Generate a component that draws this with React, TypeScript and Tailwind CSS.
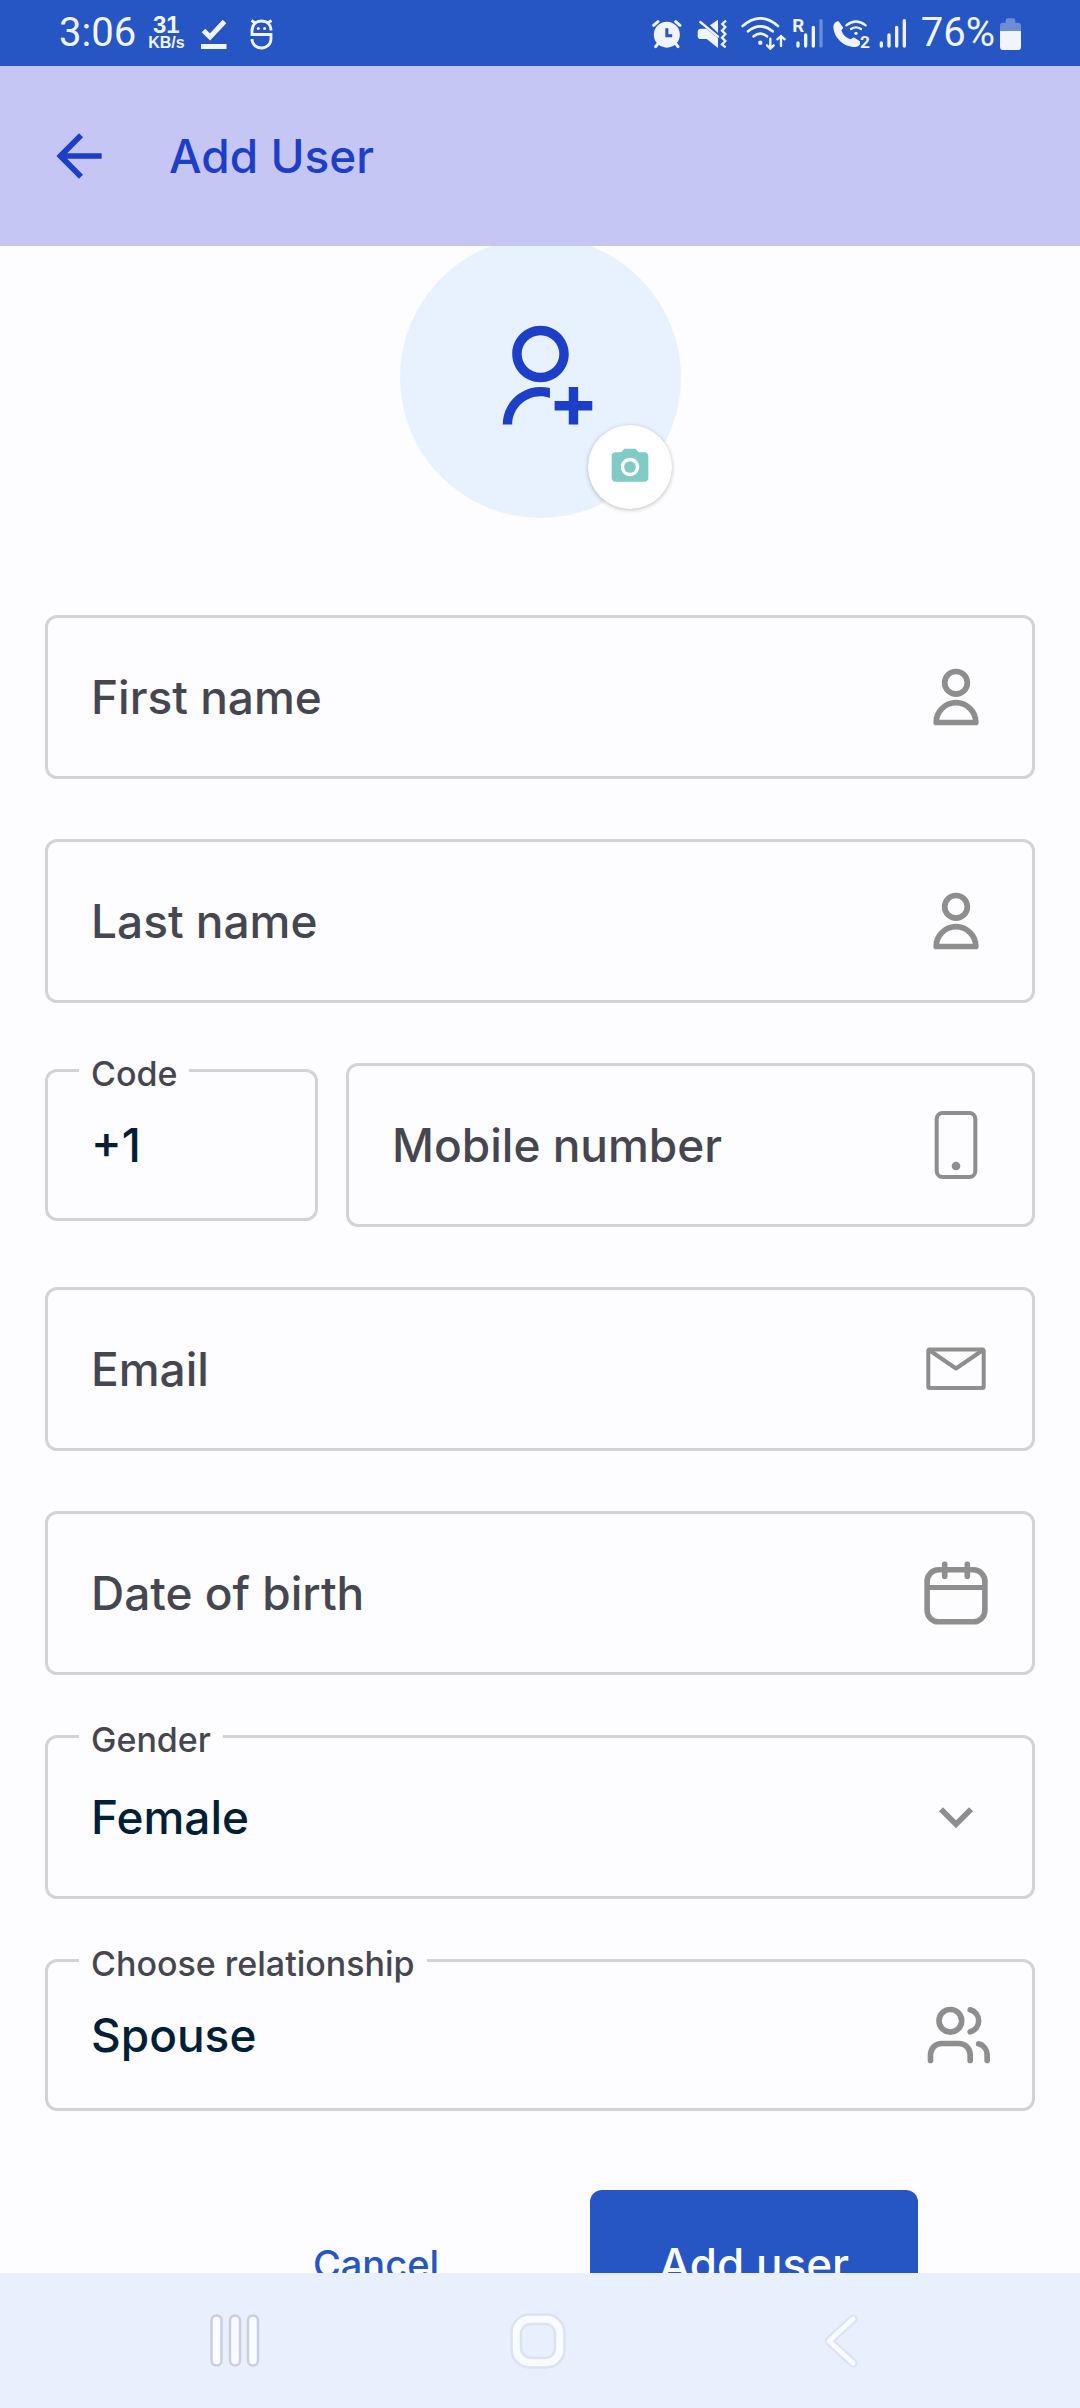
import { ReactNode, useState } from "react";
import { MdArrowBack, MdCameraAlt, MdKeyboardArrowDown } from "react-icons/md";
import { RiUserAddLine } from "react-icons/ri";

const UserIcon = () => (
  <svg viewBox="0 0 24 24" className="size-[68px]" fill="none" stroke="currentColor" strokeWidth="2" strokeLinejoin="round">
    <circle cx="12" cy="7" r="4" />
    <path d="M5 21a7 7 0 0 1 14 0z" />
  </svg>
);

const PhoneIcon = () => (
  <svg viewBox="0 0 68 68" className="size-[68px]" fill="none" stroke="currentColor" strokeWidth="4">
    <rect x="14.7" y="2" width="38.6" height="64" rx="6" />
    <circle cx="34" cy="55" r="4.3" fill="currentColor" stroke="none" />
  </svg>
);

const MailIcon = () => (
  <svg viewBox="0 0 68 68" className="size-[68px]" fill="none" stroke="currentColor" strokeWidth="4" strokeLinejoin="round">
    <rect x="6.3" y="14.5" width="55.4" height="38.5" rx="1.5" />
    <path d="M7 15l27 18.5L61 15" />
  </svg>
);

const CalendarIcon = () => (
  <svg viewBox="0 0 68 68" className="size-[68px]" fill="none" stroke="currentColor" strokeWidth="5.6" strokeLinecap="round">
    <rect x="5.1" y="10.8" width="57.8" height="52" rx="11.5" />
    <path d="M22.7 5.2v12M45.3 5.2v12" />
    <path d="M5 28.6h58" strokeWidth="5" strokeLinecap="butt" />
  </svg>
);

const UsersIcon = () => (
  <svg viewBox="0 0 24 24" className="size-[68px]" fill="none" stroke="currentColor" strokeWidth="2" strokeLinecap="round">
    <circle cx="10" cy="7" r="4" />
    <path d="M3 21v-2a4 4 0 0 1 4-4h6a4 4 0 0 1 4 4v2" />
    <path d="M17 3.13a4 4 0 0 1 0 7.75" />
    <path d="M20 15.13A4 4 0 0 1 23 19v2" />
  </svg>
);

function StatusBar() {
  return (
    <div className="flex h-[66px] shrink-0 items-center justify-between bg-[#2656c3] pl-[59px] pr-[59px] font-[Roboto,sans-serif] font-normal text-[#f1f4fd]">
      <div className="flex items-center">
        <span className="text-[40px] leading-[48px]">3:06</span>
        <div className="ml-3 flex flex-col items-center font-['Liberation_Sans',sans-serif] font-bold">
          <span className="text-[24px] leading-5">31</span>
          <span className="text-[16px] leading-4">KB/s</span>
        </div>
        <svg viewBox="201 16 26 33" className="ml-4 h-[33px] w-[26px]" fill="none" stroke="currentColor" strokeWidth="5">
          <path d="M203.500 29.500l6.500 6.500 14.500-15.500" />
          <path d="M201 45.500h25.500" />
        </svg>
        <svg viewBox="248 16 25 33" className="ml-[22px] h-[33px] w-[25px]" fill="none" stroke="currentColor" strokeWidth="2.800">
          <path d="M270 29.500c0-6-4-9.500-9.700-9.500s-9.300 4-9.300 10v3.500h19v4c0 5.500-4 9.500-9.500 9.500s-9.500-4-9.500-9" />
          <path d="M250.500 19.500l4.500 3M270.500 19.500l-4.500 3" />
          <circle cx="257.300" cy="27.500" r="1.500" fill="currentColor" stroke="none" />
          <circle cx="263.600" cy="27.500" r="1.500" fill="currentColor" stroke="none" />
        </svg>
      </div>

      <div className="flex items-center">
        <svg viewBox="158 48 90 99" className="h-[33px] w-[30px]" fill="none" stroke="currentColor" strokeWidth="9" strokeLinecap="round">
          <circle cx="202.500" cy="101" r="39" fill="currentColor" stroke="none" />
          <path d="M163 73l13-11M242 73l-13-11M176 128l-7 9M229 128l7 9" />
          <path d="M202.500 82v22h16" stroke="#2656c3" strokeLinecap="butt" />
        </svg>
        <svg viewBox="292 48 93 99" className="ml-[15px] h-[33px] w-[31px]" fill="none" stroke="currentColor">
          <path d="M294 93q0-10 10-10h16l35 29v29l-34-27h-17q-10 0-10-10zM355 56v40l-24-23z" fill="currentColor" stroke="none" />
          <path d="M302 63l53 44" strokeWidth="7" strokeLinecap="round" />
          <path d="M379 59l-11 10 9 9-10 11 10 10-10 11 10 10-10 10 11 9" strokeWidth="7" />
        </svg>
        <svg viewBox="424 48 138 99" className="ml-[13px] h-[33px] w-[46px]" fill="none" stroke="currentColor" strokeWidth="8" strokeLinecap="round">
          <path d="M429 75q53-46 106 0" />
          <path d="M445 91q37-30 74 0" />
          <path d="M462 106q20-16 40 0" />
          <circle cx="482" cy="125" r="6.500" fill="currentColor" stroke="none" />
          <path d="M512 113v30M502 133l10 10 10-10M544 135v-30M533 115l11-10 11 10" strokeWidth="7" />
        </svg>
        <svg viewBox="579 48 93 99" className="ml-[6px] h-[33px] w-[31px] overflow-visible" fill="none" stroke="currentColor" strokeWidth="10" strokeLinecap="round">
          <text x="577" y="93" fontSize="56" fontWeight="700" fill="currentColor" stroke="none">R</text>
          <path d="M594 126v9M617 102v33M640 79v56" />
          <path d="M663 59v76" opacity="0.350" />
        </svg>
        <svg viewBox="699 48 114 99" className="ml-[9px] h-[33px] w-[38px] overflow-visible" fill="none" stroke="currentColor" strokeWidth="7" strokeLinecap="round">
          <path d="M715 60c-9 2-15 8-15 18 2 34 32 60 65 60 7 0 12-3 15-8v-9l-17-11c-3-1-6 2-10 5-14-4-25-14-29-27 4-4 6-6 5-9z" fill="currentColor" stroke="none" />
          <path d="M739 73q29-23 58 0M753 84q15-10 30 0" />
          <circle cx="768" cy="97" r="5" fill="currentColor" stroke="none" />
          <text x="780" y="140" fontSize="52" fontWeight="700" fill="currentColor" stroke="#2656c3" paintOrder="stroke">2</text>
        </svg>
        <svg viewBox="836 48 84 99" className="ml-2 h-[33px] w-[28px]" fill="none" stroke="currentColor" strokeWidth="10" strokeLinecap="round">
          <path d="M843 126v9M866 102v33M889 79v56M912 59v76" />
        </svg>
        <span className="ml-[14px] text-[40px] leading-[48px]">76%</span>
        <svg viewBox="1200 48 63 99" className="ml-[5px] h-[33px] w-[21px]" fill="currentColor">
          <path d="M1200 90V74q0-9 9-9h8v-6q0-7 7-7h15q7 0 7 7v6h8q9 0 9 9v16z" opacity="0.350" />
          <path d="M1200 90h63v47q0 10-10 10h-43q-10 0-10-10z" />
        </svg>
      </div>
    </div>
  );
}

function Field({
  id,
  label,
  value,
  icon,
  dense,
  children,
  type = "text",
}: {
  id: string;
  label: string;
  value?: string;
  icon?: ReactNode;
  dense?: boolean;
  children?: ReactNode;
  type?: string;
}) {
  const filled = value !== undefined;

  return (
    <div
      className={`relative flex w-full min-w-0 items-center rounded-xl border-3 border-[#d3d3d4] pl-[43px] pr-[42px] ${
        dense ? "h-[152px]" : "h-[164px]"
      }`}
    >
      <label
        htmlFor={id}
        className={
          filled
            ? "absolute -top-[18px] left-[31px] bg-[#fdfdff] px-3 text-[34px] leading-10 text-[#464650]"
            : "shrink-0 text-[46px] leading-[56px] text-[#464650]"
        }
      >
        {label}
      </label>
      {children ?? (
        <input
          id={id}
          type={type}
          defaultValue={value}
          className="w-full min-w-0 flex-1 bg-transparent text-[46px] leading-[56px] text-[#001e35] outline-none"
        />
      )}
      {icon && <span className="shrink-0 text-[#8e8e8e]">{icon}</span>}
    </div>
  );
}

function NavBar() {
  return (
    <nav className="grid h-[135px] shrink-0 grid-cols-3 place-items-center bg-[#e8effd] pl-[84px] pr-[88px]">
      <button type="button" aria-label="Recents">
        <svg viewBox="0 0 50 56" className="h-14 w-[50px]" fill="#f8fbff" stroke="#c9cfdc" strokeWidth="2.500">
          <rect x="1.500" y="2.500" width="10" height="50" rx="5" />
          <rect x="20" y="2.500" width="10" height="50" rx="5" />
          <rect x="38" y="2.500" width="10" height="50" rx="5" />
        </svg>
      </button>
      <button type="button" aria-label="Home">
        <svg viewBox="0 0 56 56" className="size-14" fill="#f8fbff" stroke="#dbe2f0" strokeWidth="2.500">
          <rect x="1.500" y="1.500" width="53" height="53" rx="18" />
          <rect x="11" y="11" width="34" height="34" rx="10" fill="#e8effd" />
        </svg>
      </button>
      <button type="button" aria-label="Back">
        <svg viewBox="0 0 36 56" className="h-14 w-9" fill="none" strokeLinecap="round" strokeLinejoin="round">
          <path d="M30 6L6 28l24 22" stroke="#dbe2f0" strokeWidth="9" />
          <path d="M30 6L6 28l24 22" stroke="#f8fbff" strokeWidth="5" />
        </svg>
      </button>
    </nav>
  );
}

export default function App() {
  const [gender, setGender] = useState("Female");

  return (
    <div className="flex h-screen flex-col bg-[#fdfdff] font-[Inter,sans-serif] font-medium">
      <StatusBar />
      <header className="flex h-[180px] shrink-0 items-center bg-[#c5c6f3] pl-[45px] text-[#1d3ec6]">
        <button type="button" aria-label="Back">
          <MdArrowBack className="size-[68px]" />
        </button>
        <h1 className="ml-[56px] text-[46px] leading-[56px]">Add User</h1>
      </header>

      <main className="min-h-0 flex-1 overflow-y-auto px-[45px] [scrollbar-width:none]">
        <div className="relative mx-auto -mt-[9px] flex size-[281px] items-center justify-center rounded-full bg-[#e8f1fe] text-[#1d3ec6]">
          <RiUserAddLine className="size-[113px]" />
          <button
            type="button"
            aria-label="Add photo"
            className="absolute bottom-[9px] right-[9px] flex size-[84px] items-center justify-center rounded-full bg-white text-[#80cbc4] shadow-[0_1px_4px_rgba(0,0,0,0.25)]"
          >
            <MdCameraAlt className="size-[44px]" />
          </button>
        </div>

        <form className="mt-[97px]" onSubmit={(e) => e.preventDefault()}>
          <div className="flex flex-col gap-[60px]">
            <Field id="firstName" label="First name" icon={<UserIcon />} />
            <Field id="lastName" label="Last name" icon={<UserIcon />} />
            <div className="flex items-center gap-7">
              <div className="w-[273px] shrink-0">
                <Field id="code" label="Code" value="+1" type="tel" dense />
              </div>
              <Field id="mobile" label="Mobile number" type="tel" icon={<PhoneIcon />} />
            </div>
            <Field id="email" label="Email" type="email" icon={<MailIcon />} />
            <Field id="dob" label="Date of birth" icon={<CalendarIcon />} />
            <Field
              id="gender"
              label="Gender"
              value={gender}
              icon={<MdKeyboardArrowDown className="size-[68px]" />}
            >
              <select
                id="gender"
                value={gender}
                onChange={(e) => setGender(e.target.value)}
                className="min-w-0 flex-1 appearance-none bg-transparent text-[46px] leading-[56px] text-[#001e35] outline-none"
              >
                <option>Female</option>
                <option>Male</option>
                <option>Other</option>
              </select>
            </Field>
            <Field id="relationship" label="Choose relationship" value="Spouse" icon={<UsersIcon />} dense />
          </div>

          <div className="mt-[79px] flex justify-end gap-[50px] pb-10 pr-[117px]">
            <button type="button" className="h-[148px] w-[328px] text-[38px] text-[#2656c3]">
              Cancel
            </button>
            <button type="submit" className="h-[148px] w-[328px] rounded-xl bg-[#2656c3] text-[44px] text-white">
              Add user
            </button>
          </div>
        </form>
      </main>
      <NavBar />
    </div>
  );
}
